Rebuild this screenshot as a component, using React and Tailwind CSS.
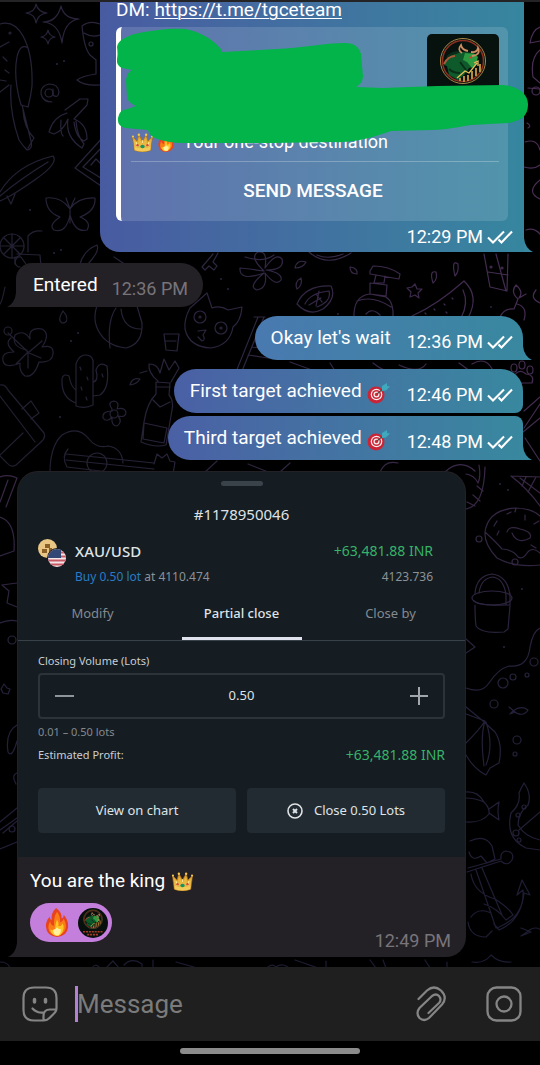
import React from "react";

function Doodles() {
  return (
    <svg
      aria-hidden="true"
      className="absolute inset-0 h-full w-full"
      viewBox="0 0 540 1065"
      preserveAspectRatio="xMidYMin slice"
      fill="none"
      strokeWidth="1.2"
      strokeLinecap="round"
      strokeLinejoin="round"
    >
      <defs>
        <linearGradient id="ink" gradientUnits="userSpaceOnUse" x1="0" y1="400" x2="540" y2="220">
          <stop offset="0" stopColor="#201e2e" />
          <stop offset="0.5" stopColor="#302642" />
          <stop offset="1" stopColor="#482d54" />
        </linearGradient>
        <linearGradient id="inkLow" gradientUnits="userSpaceOnUse" x1="0" y1="460" x2="0" y2="960">
          <stop offset="0" stopColor="#3a2847" />
          <stop offset="0.4" stopColor="#27213a" />
          <stop offset="1" stopColor="#1c1c32" />
        </linearGradient>
      </defs>
      <g stroke="url(#ink)">
        {/* sparkles */}
        <path d="M26 11q9-1 10-9q2 8 11 9q-9 1-11 10q-1-9-10-10zM43 20q14 0 18-16q3 13 18 13q-15 2-17 24q-3-20-19-21zM41 35q6-1 7-7q1 6 7 7q-6 1-7 7q-1-6-7-7z" />
        {/* parrot */}
        <path d="M0 22q14-4 23 12q10 18 9 50q-1 10-4 21l-7-2q-8-28-4-48q3-14 11-9M0 45l9-5M0 90l9-7M11 83q-2 26 8 55q4 6 8 10q6-1 4-9l-9-36M23 108q1 18 11 28l-6 10M3 55l4 4M5 68l4 3M0 78l6 1" />
        <circle cx="10" cy="31" r="1" />
        {/* at sign */}
        <circle cx="49" cy="91" r="4" />
        <path d="M53 87v6q5 4 6-3q-1-8-10-8q-9 2-8 10q2 8 11 8" />
        {/* cocktail */}
        <path d="M82 24q8-6 18-2M82 24q2 22 8 29l6 5v14q-14 2-19 6q7 6 23 5M84 31q8 5 16 2" />
        <circle cx="91" cy="42" r="2" />
        {/* banana */}
        <path d="M65 108l15-11 8 0-1 6-13 14q13 5 13 20l-3 2q-8-3-10-19M67 111q-14 4-18 19l5 2q9-3 14-15q-3 18 14 29l2-4q-7-8-8-23M61 118q-1 13 2 16" />
        {/* surfboard */}
        <path d="M0 190q16-27 53-36q6 7-17 23q-24 17-36 22M0 194q20-17 48-34M7 194l4 8 4-10" />
        {/* photo card */}
        <path d="M104 134l-29 32 29 20M104 143l-21 22 21 13M91 163l5-6 4 4" />
        {/* butterfly */}
        <path d="M70 207q-9-13-24-11q0 14 14 19q-12 8-6 13q12 4 16-15q5 18 17 15q5-8-7-13q16-6 15-19q-17-1-25 11v14M70 207l-4-11M70 207l5-11" />
        {/* juice */}
        <circle cx="12" cy="244" r="12" />
        <path d="M0 244h24M12 232v24M4 236l16 16M20 236L4 252M28 250v-16q5-6 14-5M17 252l23 1 1 12M15 262q0-8 6-7l7 10M80 262q4-14 17-19q3 6-9 19" />
        {/* beach ball */}
        <path d="M100 297q-9 17-2 31q8 16 28 18q17-4 16-25l-5-17M110 346q-3-27 6-40M141 327q-18 0-20-20" />
        <path d="M63 309q-6 9-1 12q7 0 4-8z" />
        {/* hibiscus */}
        <path d="M27 348q-16-3-12-15q9-6 15 4q-2-12 12-10q9 5 0 18q12-3 11 7q-1 9-14 8q-5 16-14 14q-6-4-5-13q-15 6-17-2q-2-9 11-9q-10-9-3-14M28 350L8 331M29 350l13-11M28 350l-12 12M29 351l12 5M28 351v15" />
        <circle cx="8" cy="329" r="4" />
        {/* cactus */}
        <path d="M76 404v-42q4-12 14-8q4 3 3 9v40q-8 4-17 1zM93 380q6-1 3-12q3-9 11-4q3 22-7 29l-7 1M76 388q-5-3-7-14q-6-3-7 3q-1 19 14 24M80 365l1 3M87 375l1 3M81 385l1 3M86 395l1 3M102 372l1 3" />
        {/* small flower */}
        <circle cx="114" cy="412" r="4" />
        <path d="M112 407q-5-7 2-8q6 1 3 8q7-2 9 3q0 6-8 4q5 6-1 10q-6 0-5-9q-5 6-9 1q-1-7 9-7z" />
        {/* bottle */}
        <path d="M156 380l14 1-1 12q5 6 3 15l-6 35q-11 3-25-3l3-20q3-19 12-28zM156 385h14M153 398l7 7 10-5M144 421l23 5-3 15-21-4zM164 332h15l-2 17-11-1zM165 339h11M158 379q-10-8-9-17q9 0 11 9l4-14 5 11 6-9 4 7-8 14M130 383q2-8 10-6q-3 5-10 6M140 371l7-2" />
        {/* suitcase */}
        <path d="M0 383q5-1 8 5l36 43q2 5-3 9l-25 23q-5 3-9-2l-7-7M0 394l35 46M22 407l9-8 8 12-8 6M0 453l23-22" />
        {/* guitar */}
        <path d="M50 471q0-27 12-38q16-10 27 4q8 10 19 7q14 2 15 17M68 447q-7 8-1 18l50 6M66 452l88 9M66 458l88 9M154 462l3-10 5 4 5-4 3 7 5 1-2 12" />
        <circle cx="97" cy="461" r="10" />
        {/* cat */}
        <path d="M190 306l17-15 5 15q8-3 16 2l14-3q-1 14-9 20q-3 18-22 21q-22-1-26-19q-1-10 5-21M198 329l8-1-3 5q3 5-1 6l-4-4" />
        <circle cx="200" cy="315" r="6" />
        <circle cx="221" cy="326" r="6" />
        <circle cx="200" cy="315" r="1" />
        <circle cx="221" cy="326" r="1" />
        {/* key */}
        <path d="M213 252l-11 13 3 3 4-4 5 4 3-4-4-4 5-9" />
        {/* frangipani */}
        <path d="M264 269q-21-3-24-3q-1 14 24 5q-17 14-7 17q11-2 8-17q11 14 16 7q2-7-15-10q19 0 16-11q-6-7-17 9q3-18-7-16q-9 5 6 19" />
        {/* citrus */}
        <path d="M297 302q8-19 34-18q6 12-8 23q-14 8-26-5zM305 302q5-11 24-13q3 10-12 16M316 304l3-15M322 300l-6-8M309 303l12-7M309 250q18 16 42 1M317 253q11 5 26-1" />
        <path d="M295 266q2-9 11-6q-3 6-11 6M297 287q-3-7 4-11q2 7-4 11M350 265q0 7 7 7q1-6-7-7M436 270q-7-2-3 11q5-4 3-11M458 262q-7-5-3 12q4-4 3-12" />
        {/* soap bottle */}
        <path d="M370 269l3-5q16 0 27 8l-1 5-29-5zM376 273l-2 8h10l1-7M370 281l17 2-1 11-16-2zM354 316q-1-22 16-24l16 3q8 5 7 21M357 299q16-6 34 6M366 312q6-7 14 1" />
        {/* star and melon */}
        <path d="M415 282l2 5h5l-4 4 1 5-4-3-5 2 1-5-4-4 5-1zM412 314q25-11 52-35q16 15 4 37M463 288q6 13-2 28M425 311l1 1M434 307l1 1M444 302l1 1M452 296l1 1M446 310l1 1" />
        {/* drink */}
        <path d="M484 252l6 33 17 4 1-37M488 270l20 3M496 252l10 37" />
        <circle cx="491" cy="265" r="1" />
        <circle cx="502" cy="266" r="1" />
        {/* cherries */}
        <path d="M500 315q4-9 14-8l4-10q-8-7-2-14q8 7 3 13l7-4M517 302q11 3 7 16M536 288q-7 8 4 13" />
        {/* right margin doodles */}
        <path d="M540 25q-8 3-10 16l10-2M540 48q-10 8-7 27l7 6M528 86l12 1M527 121q5 3 1 5M525 140q12-4 15 8M524 165q10 3 16-2M540 178q-15 12 0 19M526 228q8-3 14 4" />
        <circle cx="536" cy="89" r="4" />
        {/* book */}
        <path d="M258 315l-22 55M264 315l-22 54M254 315h11M248 353l20 3M252 345l8 1M290 360l22 8M330 361l5 8M373 361q10 8 16 8M399 363q20 9 27-1M459 361l11 8M472 362q15-9 22 9" />
        <path d="M514 374q5-8 12-2q9 1 6 9l-9 0q-9 2-9-7" />
        <ellipse cx="514" cy="366" rx="3" ry="4" />
        <ellipse cx="522" cy="363" rx="3" ry="4" />
        <ellipse cx="530" cy="368" rx="3" ry="4" />
        <path d="M540 395l-16 14M540 402l-16 24M540 416l-17 14M525 436l15 23M205 470l12-11M248 462l20 8M380 470q5-12 18-9M280 470l10-9M445 470q15-14 30-1" />
        <path d="M245 255q18 6 29-2M15 255q-1 10 5 10M114 255l12 8M5 285q-3 15-5 17" />
      </g>
      <g stroke="url(#inkLow)">
        <path d="M466 472q8 1 12 9q3-6 1-18M466 507q18-3 19-42M467 500l8 4M473 493l7 6M477 484l6 5" />
        <path d="M511 474l29 1M511 474q16 12 29 30M520 476l20 15M526 475l-4 9M536 475l-8 15" />
        <path d="M485 530q3-22 30-24q16 0 25 8M485 530q-1 12 12 26q18 10 43 7M485 530q11 10 17 17q12 1 16 8q5 3 9-4q5-7 13 0M507 530q2-7 13-3q13 3 10 9q-13 7-18-5M497 519l-3 5M507 512l4-2M515 510l1-4M525 513v5M497 533l2-4M534 522l5-3M531 543l5 3" />
        <circle cx="479" cy="537" r="3" />
        <circle cx="515" cy="560" r="3" />
        <path d="M475 592q1-18 17-20q16 2 18 22M479 591q2-15 14-16q11 2 13 18v10h4v-12M474 599q5 5 34 4M475 603q0 13 1 21q5 8 28 6l4-3 2-23" />
        <ellipse cx="492" cy="596" rx="20" ry="7" />
        <path d="M466 637l9 8-9 6M466 686q16 6 23-5q9-14 20-17q19 2 21-19q3-16 10-19" />
        <circle cx="503" cy="681" r="5" />
        <circle cx="513" cy="675" r="3" />
        <circle cx="527" cy="673" r="2" />
        <circle cx="534" cy="660" r="4" />
        <circle cx="494" cy="702" r="4" />
        <circle cx="517" cy="738" r="4" />
        <circle cx="515" cy="752" r="2" />
        <path d="M509 705l6 5-5 2 3-3q8-6 15-1q-5 8-15 1" />
        <path d="M466 705l17 14 12 11q8 12 4 31l-9 5-4 7q-12-6-20-20M466 712l19 7q-5 8-19 22M485 719q-5 15-1 45M486 720q8 23 0 43" />
        <path d="M466 790q12-1 18 10q6 6 5 12q-7 9-23 8M484 800q-9-4-18-4M489 807l10-7q-2 9 0 18l-10-7" />
        <path d="M524 781q8 11 4 22q-10 8-10 20q7 12 22 15M524 781q-3 5-5 10q2 11-8 20q-6 25 15 35l14 2M519 828l21-18" />
        <circle cx="524" cy="805" r="2" />
        <circle cx="518" cy="813" r="2" />
        <circle cx="516" cy="831" r="3" />
        <circle cx="519" cy="838" r="2" />
        <path d="M468 866l33-9q-1-7 5-8q9 1 6 9q-5 7-11 1l-34 11M476 868l20 58M482 866l20 47M497 926q28-11 26-38l-6 5 5-15 8 15-6-2q-3 28-25 37l-5-6M470 839q15-7 22 5l3 13-8 4-6-7q-9 6-12-4M471 872q3 19 24 25q14 9 18 16l-7 5q-9-12-22-16M471 915q7-10 20-4M468 920q2 15 18 15l6-6" />
        <path d="M521 926l10 4-10 4 6-4q9-8 16 0M472 960q12 2 19-7q8 8 20 7" />
        <path d="M0 475q8-3 17 1M0 500l8-22M6 505l11-29M0 515q16 5 14 34l-14 5M2 583l15-2M2 583l7 6-2 12 10 4M0 621q9-4 17-2" />
        <circle cx="12" cy="638" r="4" />
        <path d="M1 687l3-5 3 4 3 1-2 5-5-1zM17 723q-12 7-9 27q4 7 9-11M17 771q-6 2-1 11M0 820l17-14M0 828l17-12M3 831l14-12M0 847l17-7" />
        <circle cx="12" cy="827" r="3" />
        <path d="M0 960q8 0 10 6M92 966q3-5 7-1M107 965l6-6 6 7M124 963q8-8 18-1v4M153 958v8M176 960l18 5M267 966q5-5 9-1q7-5 14 2M295 958l26 9M326 959v8M370 958l6 8M383 958l3 8M425 958l5 8M447 960v6" />
      </g>
      <g fill="#2b2440">
        <circle cx="57" cy="62" r="1" />
        <circle cx="64" cy="59" r="1" />
        <circle cx="30" cy="208" r="1" />
        <circle cx="54" cy="251" r="1" />
        <circle cx="61" cy="248" r="1" />
        <circle cx="71" cy="339" r="1" />
        <circle cx="78" cy="331" r="1" />
        <circle cx="60" cy="415" r="1" />
        <circle cx="221" cy="277" r="1" />
        <circle cx="228" cy="287" r="1" />
        <circle cx="338" cy="312" r="1" />
        <circle cx="491" cy="305" r="1" />
        <circle cx="500" cy="482" r="1" />
        <circle cx="508" cy="488" r="1" />
        <circle cx="522" cy="587" r="1" />
        <circle cx="504" cy="645" r="1" />
      </g>
    </svg>
  );
}

function Crown() {
  return (
    <svg role="img" aria-label="crown" viewBox="0 0 24 22" className="h-5 w-[23px] shrink-0">
      <path d="M1 5l5 5 2-7 4 7 4-7 2 7 5-5-2 15q-9 4-18 0z" fill="#dfa632" stroke="#a96e16" strokeWidth=".8" />
      <path d="M2 8l5 5 1-6 4 6 4-6 1 6 5-5-1 8q-9 4-18 0z" fill="#e9b840" />
      <path d="M3 16q9 4 18 0l-.4 4q-9 3-17.200 0z" fill="#f0ca5a" />
      <path d="M5 11l1 5M12 9v3M19 11l-1 5" stroke="#fbe391" strokeWidth="1.200" />
      <circle cx="1.500" cy="5" r="1.200" fill="#f4c84c" />
      <circle cx="8" cy="3" r="1.300" fill="#f4c84c" />
      <circle cx="16" cy="3" r="1.300" fill="#f4c84c" />
      <circle cx="22.500" cy="5" r="1.200" fill="#f4c84c" />
      <ellipse cx="12" cy="16" rx="2.400" ry="2" fill="#159463" />
      <circle cx="6.500" cy="14.500" r="1.300" fill="#d6493d" />
      <circle cx="17.500" cy="14.500" r="1.300" fill="#d6493d" />
    </svg>
  );
}

function Fire({ className }) {
  return (
    <svg role="img" aria-label="fire" viewBox="0 0 24 30" className={className}>
      <path d="M11 0q6 4 6 11q2-1 2-4q5 6 4.500 13q-1 9-11.500 10q-11-1-11.500-11q0-6 4-10q0 3 2 4q-1-8 4.500-13z" fill="#e8431f" />
      <path d="M12 4q4 5 3 11q3-1 4-4q3 6 2 10q-2 7-9 7.500q-8-.5-9-8q0-4 2-7q0 4 4 5q-1-8 3-14.500z" fill="#fa7c17" />
      <path d="M12 12q2 3 1.500 7q3 0 4.500-3q2 5-.5 9q-2 4-6 4q-6-1-6.500-7q3 2 5 0q0-5 2-10z" fill="#fdc524" />
      <path d="M12 20q1 2 4 2q0 6-4 6.500q-4-.5-4-6q3 0 4-2.500z" fill="#fff1a0" />
    </svg>
  );
}

function Target() {
  return (
    <svg role="img" aria-label="direct hit" viewBox="0 0 24 22" className="h-[22px] w-6 shrink-0">
      <circle cx="9" cy="13" r="8.500" fill="#ca2537" />
      <circle cx="9.500" cy="12.500" r="5.800" fill="#f4eeee" />
      <circle cx="9.500" cy="12.500" r="4.600" fill="#cf2b3c" />
      <circle cx="9.500" cy="12.500" r="3" fill="#f4eeee" />
      <circle cx="9.500" cy="12.500" r="1.700" fill="#cf2b3c" />
      <path d="M10 12l8-7" stroke="#57463f" strokeWidth="1.200" />
      <path d="M15 4l5-3v3l3 .5-4 4-4 .5z" fill="#3fa9bd" />
    </svg>
  );
}

function Checks() {
  return (
    <svg role="img" aria-label="Read" viewBox="0 0 26 16" className="h-4 w-[26px] shrink-0" fill="none" stroke="#fff" strokeWidth="2.100">
      <path d="M1 8.500l5 5L17 2.500M11.500 10.500l3 3L25 2.500" />
    </svg>
  );
}

function BullArt() {
  return (
    <g fill="none">
      <circle cx="36" cy="27" r="22.500" stroke="#a98a48" strokeWidth="1" />
      <circle cx="36" cy="27" r="20.500" stroke="#8f2f22" strokeWidth="1.500" />
      <path d="M17 31q4-10 14-12l5-1 11 1 3 6-3 8-5 1-5 7-6 5-9-5-2-9z" fill="#0f5a2a" />
      <path d="M38 19l10 1 3 3-2 7-4 4-5-6-4-2z" fill="#2c9a41" />
      <path d="M20 24q2-5 12-6M22 35q4 4 11 4M33 28l6 8" stroke="#0a2f18" strokeWidth="2" />
      <path d="M35 19q-5-3-1-8q1 5 7 6M44 18q6 1 7-4q3 7-6 8" stroke="#c88d60" strokeWidth="1.800" />
      <path d="M17 30q4-8 11-8" stroke="#a65a3c" strokeWidth="2" />
      <path d="M42 23l3 1" stroke="#e33927" strokeWidth="1.500" />
      <path d="M30 44l8-7 4 2 8-10M47 29l4-2v5" stroke="#e4bd58" strokeWidth="1.300" />
      <path d="M33 47v-3M37 48v-6M41 47v-6M45 45v-8M49 42v-8M53 38v-8" stroke="#b98c3c" strokeWidth="2" />
    </g>
  );
}

function Tail({ side }) {
  return side === "right" ? (
    <svg aria-hidden="true" viewBox="0 0 9 14" className="absolute bottom-0 left-full h-[14px] w-[9px]">
      <path d="M0 0q1 10 9 14H0z" fill="#38889f" />
    </svg>
  ) : (
    <svg aria-hidden="true" viewBox="0 0 9 14" className="absolute right-full bottom-0 h-[14px] w-[9px]">
      <path d="M9 0q-1 10-9 14h9z" fill="#242126" />
    </svg>
  );
}

function Outgoing({ text, time, target, tail, first, joined }) {
  return (
    <article
      className={`relative flex h-11 items-center self-end rounded-l-[22px] bg-linear-to-r to-[#38889f] pr-[10px] pl-4 text-white ${
        first ? "from-[#4979b0]" : "from-[#4a60a5]"
      } ${joined ? "rounded-tr-lg" : "rounded-tr-[22px]"} ${tail ? "rounded-br-none" : "rounded-br-lg"}`}
    >
      <p className="flex items-center text-[19px] leading-6">
        {text}
        {target && <span className="ml-[5px] pt-1"><Target /></span>}
      </p>
      <span className="ml-4 flex items-center gap-1 pt-2 text-lg leading-6">
        <time>{time}</time>
        <Checks />
      </span>
      {tail && <Tail side="right" />}
    </article>
  );
}

function Coins() {
  return (
    <svg aria-hidden="true" viewBox="0 0 28 28" className="h-7 w-7 shrink-0">
      <circle cx="9.500" cy="9.500" r="9.500" fill="#e9c684" />
      <path d="M7 5h5v4H7zM4 10h5v4H4zM11 9h3v4h-3z" fill="#8a6026" />
      <circle cx="19" cy="19" r="10" fill="#151c22" />
      <clipPath id="flag"><circle cx="19" cy="19" r="9" /></clipPath>
      <g clipPath="url(#flag)">
        <path d="M9 9h20v20H9z" fill="#f3e6e8" />
        <path d="M9 13.500h20M9 17.500h20M9 21.500h20M9 25.500h20" stroke="#c95865" strokeWidth="1.800" />
        <path d="M9 9h14v10H9z" fill="#314877" />
      </g>
    </svg>
  );
}

function TradeSheet() {
  return (
    <section className="rounded-t-[20px] bg-[#151c22] pt-[9px] pb-6 font-['Noto_Sans',sans-serif] text-[#dfe3e6]">
      <div className="mx-auto h-[5px] w-[42px] rounded-full bg-[#3b434a]" />
      <h2 className="mt-[18px] text-center text-[15px] leading-5">#1178950046</h2>
      <div className="mt-[15px] flex items-start pr-8 pl-5">
        <Coins />
        <div className="ml-[9px] min-w-0 flex-1">
          <div className="flex items-center justify-between leading-6">
            <span className="text-[15px] font-medium">XAU/USD</span>
            <span className="text-[14px] text-[#38b26a]">+63,481.88 INR</span>
          </div>
          <div className="flex items-center justify-between pt-1 text-[12px] leading-5 text-[#8b9298]">
            <span><span className="text-[#287cc4]">Buy 0.50 lot</span> at 4110.474</span>
            <span>4123.736</span>
          </div>
        </div>
      </div>
      <div className="mt-3 grid h-[42px] grid-cols-3 border-b border-[#394148] text-[13px] leading-5">
        <button type="button" className="flex justify-center pt-1 text-[#838a90]">Modify</button>
        <button type="button" className="relative flex justify-center pt-1 font-medium">
          Partial close
          <span className="absolute bottom-0 h-[3px] w-[120px] bg-[#dfe2ec]" />
        </button>
        <button type="button" className="flex justify-center pt-1 text-[#838a90]">Close by</button>
      </div>
      <div className="px-5 pt-3">
        <label htmlFor="volume" className="block text-[11px] leading-4 text-[#c9ced2]">Closing Volume (Lots)</label>
        <div className="mt-1 flex h-[46px] items-center justify-between rounded border-2 border-[#2c343a] px-3">
          <button type="button" aria-label="Decrease volume" className="grid h-8 w-6 place-items-center">
            <span className="h-[2px] w-[19px] bg-[#8f969b]" />
          </button>
          <input id="volume" defaultValue="0.50" className="w-20 min-w-0 bg-transparent text-center text-[13px] outline-none" />
          <button type="button" aria-label="Increase volume" className="grid h-8 w-6 place-items-center">
            <svg viewBox="0 0 20 20" className="h-5 w-5" stroke="#a1a7ac" strokeWidth="2"><path d="M1 10h18M10 1v18" /></svg>
          </button>
        </div>
        <p className="mt-[5px] text-[11px] leading-4 text-[#838a90]">0.01 – 0.50 lots</p>
        <div className="mt-[3px] flex items-center justify-between leading-6">
          <span className="text-[11px] text-[#c9ced2]">Estimated Profit:</span>
          <span className="text-[14px] text-[#38b26a]">+63,481.88 INR</span>
        </div>
        <div className="mt-[21px] grid grid-cols-2 gap-[11px] text-[13px]">
          <button type="button" className="h-[45px] rounded bg-[#222b31]">View on chart</button>
          <button type="button" className="flex h-[45px] items-center justify-center gap-[11px] rounded bg-[#222b31]">
            <svg aria-hidden="true" viewBox="0 0 16 16" className="h-4 w-4" fill="none" stroke="currentColor" strokeWidth="1.600">
              <circle cx="8" cy="8" r="7" />
              <path d="M6 6l4 4M10 6l-4 4" strokeWidth="2" />
            </svg>
            Close 0.50 Lots
          </button>
        </div>
      </div>
    </section>
  );
}

function Scribble() {
  return (
    <svg aria-hidden="true" viewBox="0 0 412 116" className="absolute top-[25px] left-[17px] h-[116px] w-[412px]">
      <path
        d="M0 20C1 13 10 9 18 7C34 3 55 1 68 2C84 5 96 13 102 20Q105 22 105 25L160 22C183 21 208 16 228 16Q241 16 244 27L246 50Q245 57 239 60L266 61L320 59L386 58C400 59 411 66 411 77C411 90 403 94 391 96L354 98C340 100 328 103 315 103L274 104Q262 108 255 110Q236 116 215 115L96 117C66 117 38 116 32 106L31 103L8 101Q0 99 1 91Q2 83 10 82L19 79Q11 76 10 70L9 53Q10 45 15 43L5 41Q-1 38 0 32Q1 27 0 20Z"
        fill="#02b449"
      />
    </svg>
  );
}

export default function App() {
  return (
    <div className="flex min-h-screen flex-col bg-black font-[Roboto,sans-serif]">
      <main className="relative isolate flex flex-1 flex-col overflow-hidden border-t-2 border-[#242326] pb-2">
        <div className="absolute inset-0 -z-10"><Doodles /></div>

        <article className="relative mr-4 ml-[100px] flex flex-col rounded-bl-[20px] bg-linear-to-r from-[#485ba1] to-[#36869f] px-4 pb-[3px] text-white">
          <p className="-mt-1 text-[19px] leading-6">
            DM: <a href="https://t.me/tgceteam" className="underline decoration-1 underline-offset-2">https://t.me/tgceteam</a>
          </p>
          <div className="mt-[5px] overflow-hidden rounded-md border-l-[5px] border-white bg-white/13 pr-[9px] pl-[10px]">
            <div className="flex h-[104px] justify-end pt-[7px]">
              <svg role="img" aria-label="Bull logo" viewBox="0 0 72 72" className="h-[72px] w-[72px] rounded-[5px] bg-[#07110e]"><BullArt /></svg>
            </div>
            <div className="flex items-center pb-2 text-[18px] leading-[22px]">
              <Crown />
              <Fire className="ml-[2px] h-5 w-5 shrink-0" />
              <span className="ml-[7px]">Your one-stop destination</span>
            </div>
            <button type="button" className="block h-[60px] w-full border-t border-white/25 pr-1 text-[19px] font-medium">SEND MESSAGE</button>
          </div>
          <span className="mt-1 -mr-[5px] flex items-center gap-1 self-end text-lg leading-6">
            <time>12:29 PM</time>
            <Checks />
          </span>
          <Scribble />
          <Tail side="right" />
        </article>

        <article className="relative mt-[11px] ml-4 flex h-11 items-center gap-[14px] self-start rounded-tl-[16px] rounded-r-[22px] bg-[#242126] pr-[15px] pl-[17px]">
          <p className="text-[19px] leading-6 text-white">Entered</p>
          <time className="pt-2 text-lg leading-6 text-[#77747a]">12:36 PM</time>
          <Tail side="left" />
        </article>

        <div className="mt-[9px] mr-[17px] flex flex-col">
          <Outgoing text="Okay let's wait" time="12:36 PM" first tail />
          <div className="mt-[9px] flex flex-col gap-[3px]">
            <Outgoing text="First target achieved" time="12:46 PM" target />
            <Outgoing text="Third target achieved" time="12:48 PM" target tail joined />
          </div>
        </div>

        <article className="relative mt-[11px] mr-[74px] ml-[17px] rounded-t-[21px] rounded-br-[20px] bg-[#242126] p-px">
          <TradeSheet />
          <div className="px-3 pt-3 pb-[3px]">
            <p className="flex items-center gap-[6px] text-[19px] leading-6 text-white">You are the king <Crown /></p>
            <div className="mt-[10px] flex items-start justify-between">
              <button type="button" aria-label="Fire reaction" className="flex h-[39px] w-[82px] items-center rounded-full bg-[#c47fdd] pl-[15px]">
                <Fire className="h-[29px] w-6 shrink-0" />
                <svg aria-hidden="true" viewBox="0 0 72 72" className="ml-[9px] h-[30px] w-[30px] rounded-full bg-[#07100c]">
                  <BullArt />
                  <path d="M12 57h48M22 64h28" stroke="#a13b25" strokeWidth="4" strokeDasharray="5 2" />
                </svg>
              </button>
              <time className="pt-[26px] pr-[2px] text-lg leading-6 text-[#77747a]">12:49 PM</time>
            </div>
          </div>
          <Tail side="left" />
        </article>
      </main>

      <form className="flex h-[74px] items-center bg-[#1f1f1f] pr-[18px] pl-[22px] text-[#858585]" onSubmit={(e) => e.preventDefault()}>
        <button type="button" aria-label="Stickers">
          <svg viewBox="0 0 36 36" className="h-9 w-9" fill="none" stroke="currentColor" strokeWidth="2.200" strokeLinecap="round">
            <path d="M12 1.500h12q10.500 0 10.500 10.500v10q0 3.500-3 6l-4 4q-2.500 2.500-6 2.500H12Q1.500 34.500 1.500 24V12Q1.500 1.500 12 1.500zM21.500 34V30q0-6.500 6.500-6.500h6M10.500 22.500q4 4.500 10.500 4" />
            <path d="M12.500 13.500v2.500M23.500 13.500v2.500" strokeWidth="3.500" />
          </svg>
        </button>
        <span className="ml-[17px] h-9 w-[3px] bg-[#b481d2]" />
        <input aria-label="Message" placeholder="Message" className="-ml-px h-10 min-w-0 flex-1 bg-transparent text-[26px] text-white outline-none placeholder:text-[#7b7b7b]" />
        <button type="button" aria-label="Attach file">
          <svg viewBox="0 0 32 36" className="h-9 w-8" fill="none" stroke="currentColor" strokeWidth="2.200" strokeLinecap="round">
            <path d="M2.500 13L11 4.500q7-6 14 0q7 7 1 14L13 32q-5 4-9.500 0q-4-5 0-10L16 10q4-3 7 0q3 4 0 7L12.500 27" />
          </svg>
        </button>
        <button type="button" aria-label="Record video" className="ml-[38px]">
          <svg viewBox="0 0 36 36" className="h-9 w-9" fill="none" stroke="currentColor" strokeWidth="2.300">
            <rect x="1.500" y="1.500" width="33" height="33" rx="9" />
            <circle cx="18" cy="18" r="7.500" />
          </svg>
        </button>
      </form>
      <footer className="flex h-6 justify-center bg-black pt-[7px]">
        <div className="h-[6px] w-1/3 rounded-full bg-[#8b8b8b]" />
      </footer>
    </div>
  );
}
